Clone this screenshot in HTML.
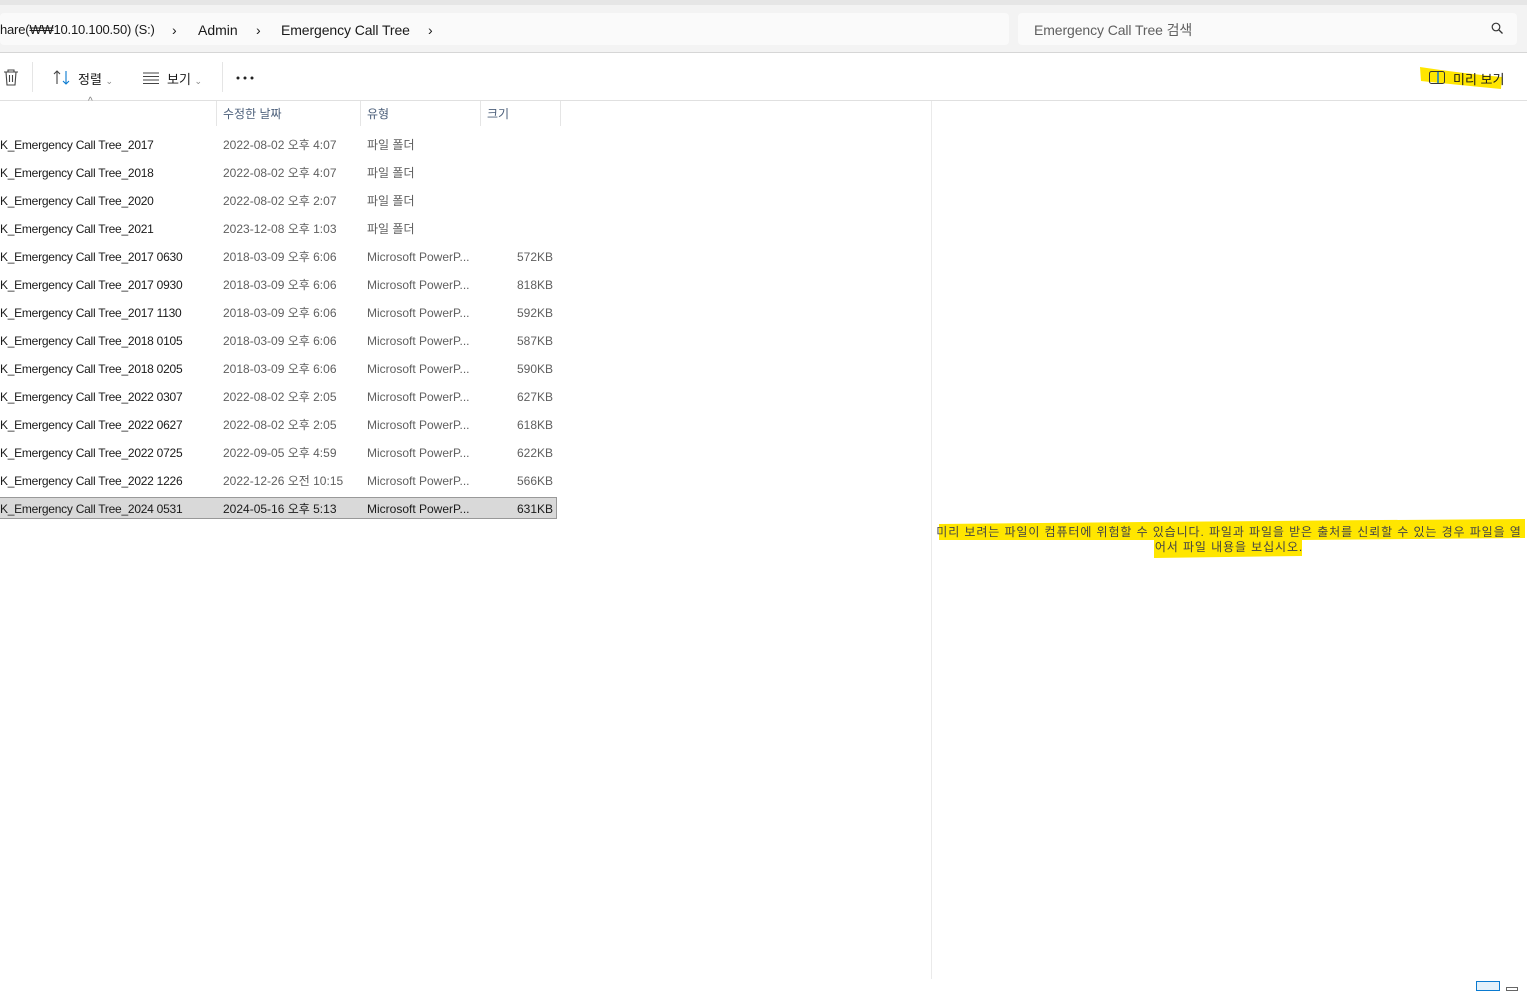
<!DOCTYPE html>
<html><head><meta charset="utf-8"><style>
*{margin:0;padding:0;box-sizing:border-box}
body{width:1527px;height:989px;overflow:hidden;background:#fff;font-family:"Liberation Sans","Noto Sans CJK KR",sans-serif;position:relative;color:#1a1a1a}
.a{position:absolute;white-space:nowrap}
.r{position:absolute;left:0;font-size:12px;height:22px;line-height:22px}
.n{letter-spacing:-0.25px}
</style></head><body>
<div class="a" style="left:0;top:0;width:1527px;height:5px;background:#e6e6e6"></div>
<div class="a" style="left:0;top:5px;width:1527px;height:48px;background:#f3f3f3;border-bottom:1px solid #d6d6d6"></div>
<div class="a" style="left:0;top:13px;width:1009px;height:32px;background:#fafafa;border-radius:4px"></div>
<div class="a" style="left:1018px;top:13px;width:499px;height:32px;background:#fafafa;border-radius:4px"></div>
<div class="a" style="left:0;top:20px;font-size:13px;line-height:20px;letter-spacing:-0.2px">hare(₩₩10.10.100.50) (S:)</div>
<div class="a" style="left:172px;top:20px;font-size:14px;line-height:20px">›</div>
<div class="a" style="left:198px;top:20px;font-size:14px;line-height:20px">Admin</div>
<div class="a" style="left:256px;top:20px;font-size:14px;line-height:20px">›</div>
<div class="a" style="left:281px;top:20px;font-size:14px;line-height:20px;letter-spacing:-0.1px">Emergency Call Tree</div>
<div class="a" style="left:428px;top:20px;font-size:14px;line-height:20px">›</div>
<div class="a" style="left:1034px;top:20px;font-size:14px;line-height:20px;color:#5f5f5f;letter-spacing:-0.1px">Emergency Call Tree 검색</div>
<svg class="a" style="left:1491px;top:22px" width="13" height="13" viewBox="0 0 13 13"><circle cx="5" cy="5" r="3.8" fill="none" stroke="#333" stroke-width="1.2"/><line x1="8" y1="8" x2="11.5" y2="11.5" stroke="#333" stroke-width="1.3"/></svg>
<div class="a" style="left:0;top:100px;width:1527px;height:1px;background:#e0e0e0"></div>
<svg class="a" style="left:3px;top:69px" width="16" height="18" viewBox="0 0 16 18"><path d="M1 3h14M5 3V1h6v2M3 3l1 13h8l1-13M6.5 6v7M9.5 6v7" fill="none" stroke="#444" stroke-width="1.1"/></svg>
<div class="a" style="left:32px;top:62px;width:1px;height:30px;background:#e5e5e5"></div>
<svg class="a" style="left:53px;top:70px" width="18" height="15" viewBox="0 0 18 15"><path d="M4 14V1M1 4l3-3 3 3" fill="none" stroke="#444" stroke-width="1.1"/><path d="M13 1v13M10 11l3 3 3-3" fill="none" stroke="#0a7ad0" stroke-width="1.1"/></svg>
<div class="a" style="left:78px;top:69px;font-size:13px">정렬 <span style="font-size:9px;color:#888">⌄</span></div>
<svg class="a" style="left:143px;top:72px" width="16" height="12"><path d="M0 1h16M0 4.5h16M0 8h16M0 11.5h16" stroke="#444" stroke-width="1"/></svg>
<div class="a" style="left:167px;top:69px;font-size:13px">보기 <span style="font-size:9px;color:#888">⌄</span></div>
<div class="a" style="left:222px;top:62px;width:1px;height:30px;background:#e5e5e5"></div>
<svg class="a" style="left:236px;top:76px" width="18" height="4"><circle cx="2" cy="2" r="1.5" fill="#222"/><circle cx="9" cy="2" r="1.5" fill="#222"/><circle cx="16" cy="2" r="1.5" fill="#222"/></svg>
<svg class="a" style="left:1419px;top:63px" width="84" height="28"><path d="M1 4 Q40 10 83 14 L82 26 Q40 22 2 18Z" fill="#ffe600"/></svg>
<svg class="a" style="left:1429px;top:71px" width="16" height="13"><rect x="0.5" y="0.5" width="15" height="12" rx="2" fill="none" stroke="#333"/><line x1="9" y1="1" x2="9" y2="12" stroke="#0a7ad0" stroke-width="1.5"/></svg>
<div class="a" style="left:1453px;top:69px;font-size:13px">미리 보기</div>
<div class="a" style="left:88px;top:96px;font-size:10px;color:#777">^</div>
<div class="a" style="left:216px;top:101px;width:1px;height:25px;background:#e5e5e5"></div>
<div class="a" style="left:360px;top:101px;width:1px;height:25px;background:#e5e5e5"></div>
<div class="a" style="left:480px;top:101px;width:1px;height:25px;background:#e5e5e5"></div>
<div class="a" style="left:560px;top:101px;width:1px;height:25px;background:#e5e5e5"></div>
<div class="a" style="left:223px;top:105px;font-size:12px;color:#4c5f7a">수정한 날짜</div>
<div class="a" style="left:367px;top:105px;font-size:12px;color:#4c5f7a">유형</div>
<div class="a" style="left:487px;top:105px;font-size:12px;color:#4c5f7a">크기</div>
<div class="a" style="left:931px;top:101px;width:1px;height:878px;background:#eaeaea"></div>
<div class="a" style="left:0;top:497px;width:557px;height:22px;background:#d9d9d9;border:1px solid #999;border-left:none"></div>
<div id="rows"></div>
<svg class="a" style="left:937px;top:515px" width="588" height="45"><path d="M2 9 Q300 6 590 4 L588 23 L365 25 L365 41 L217 43 L217 25 L2 25Z" fill="#ffe600"/></svg>
<div class="a" style="left:931px;top:525px;width:596px;text-align:center;font-size:12px;line-height:15px;color:#444;letter-spacing:0.9px">미리 보려는 파일이 컴퓨터에 위험할 수 있습니다. 파일과 파일을 받은 출처를 신뢰할 수 있는 경우 파일을 열<br>어서 파일 내용을 보십시오.</div>
<div class="a" style="left:1476px;top:981px;width:24px;height:10px;border:1px solid #0a7ad0;background:#e3f1fb"></div>
<div class="a" style="left:1506px;top:987px;width:12px;height:4px;border:1px solid #666"></div>
<script>
var d=[["2017","2022-08-02 오후 4:07","파일 폴더",""],["2018","2022-08-02 오후 4:07","파일 폴더",""],["2020","2022-08-02 오후 2:07","파일 폴더",""],["2021","2023-12-08 오후 1:03","파일 폴더",""],
["2017 0630","2018-03-09 오후 6:06","Microsoft PowerP...","572KB"],["2017 0930","2018-03-09 오후 6:06","Microsoft PowerP...","818KB"],["2017 1130","2018-03-09 오후 6:06","Microsoft PowerP...","592KB"],["2018 0105","2018-03-09 오후 6:06","Microsoft PowerP...","587KB"],["2018 0205","2018-03-09 오후 6:06","Microsoft PowerP...","590KB"],["2022 0307","2022-08-02 오후 2:05","Microsoft PowerP...","627KB"],["2022 0627","2022-08-02 오후 2:05","Microsoft PowerP...","618KB"],["2022 0725","2022-09-05 오후 4:59","Microsoft PowerP...","622KB"],["2022 1226","2022-12-26 오전 10:15","Microsoft PowerP...","566KB"],["2024 0531","2024-05-16 오후 5:13","Microsoft PowerP...","631KB"]];
var h="";d.forEach(function(r,i){var t=134+i*28;var s=i==13?"#1a1a1a":"#5f5f5f";
h+='<div class="r n" style="top:'+t+'px;left:0">K_Emergency Call Tree_'+r[0]+'</div><div class="r" style="top:'+t+'px;left:223px;color:'+s+'">'+r[1]+'</div><div class="r" style="top:'+t+'px;left:367px;color:'+s+'">'+r[2]+'</div><div class="r" style="top:'+t+'px;left:480px;width:73px;text-align:right;color:'+s+'">'+r[3]+'</div>';});
document.getElementById("rows").innerHTML=h;
</script>
</body></html>
